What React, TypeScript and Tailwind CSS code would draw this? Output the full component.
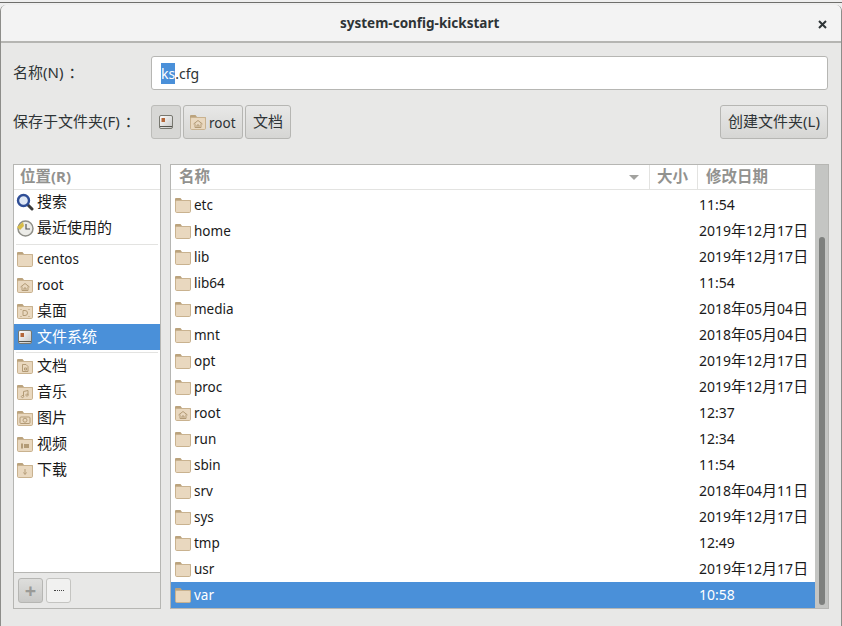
import type { ReactNode } from "react";

const font = { fontFamily: '"Noto Sans", "Noto Sans CJK SC", sans-serif' };

type Emblem = "none" | "home" | "desktop" | "doc" | "music" | "photo" | "video" | "download";

// the CJK glyphs in the dialog run larger than the latin ones
function Mixed({ text, latin = "text-[13.5px]", cjk = "text-[15px]" }: { text: string; latin?: string; cjk?: string }) {
  return (
    <span>
      {text.split(/([\u3000-\u9fff\uff00-\uffef]+)/).map((part, i) =>
        part ? (
          <span key={i} className={i % 2 ? cjk : latin}>
            {part}
          </span>
        ) : null,
      )}
    </span>
  );
}

function Folder({ emblem = "none" }: { emblem?: Emblem }) {
  const c = "#b39b76";
  return (
    <svg width="18" height="18" viewBox="0 0 18 18" className="shrink-0">
      <path d="M1 3 a1 1 0 0 1 1-1 h4.500 l1.500 2 h8 a1 1 0 0 1 1 1 v2 h-16z" fill="#bba37d" />
      <rect x="1.500" y="4.500" width="15" height="12" rx="1.200" fill="#e9d8bf" stroke="#c9b28f" />
      {emblem === "home" && <path d="M4.500 11 L9 7.500 L13.500 11 M6 10.500 V14.500 H12 V10.500 M8 14.500 V12 H10 V14.500" fill="none" stroke={c} />}
      {emblem === "desktop" && <path d="M7 8.500 h2 a2.500 2.500 0 0 1 0 5 h-2z M5 7 v1 M13 7 v1 M5 14 v1 M13 14 v1" fill="none" stroke={c} />}
      {emblem === "doc" && <path d="M6.500 7.500 h3.500 l2 2 v5 h-5.500z M8.500 11 h2 v2 h-2z" fill="none" stroke={c} />}
      {emblem === "music" && <path d="M7.500 13 v-4.500 l4.500-1 v4.500 M7.500 13 a1.200 1 0 1 1-.1-.1 M12 11.500 a1.200 1 0 1 1-.1-.1" fill="none" stroke={c} />}
      {emblem === "photo" && (
        <g fill="none" stroke={c}>
          <rect x="4" y="8" width="10" height="6.500" rx="1" />
          <circle cx="9" cy="11.200" r="2" />
        </g>
      )}
      {emblem === "video" && <path d="M5 8.500 h2 v5 h-2z M8 9 h5 v4 h-5z" fill={c} />}
      {emblem === "download" && <path d="M9 8 v4.500 M7.500 11.500 L9 13.500 L10.500 11.500" fill="none" stroke={c} />}
    </svg>
  );
}

function DriveIcon() {
  return (
    <svg width="16" height="16" viewBox="0 0 16 16" className="shrink-0">
      <defs>
        <linearGradient id="drive" x1="0" y1="0" x2="1" y2="1">
          <stop offset="0" stopColor="#ffffff" />
          <stop offset="1" stopColor="#c4c4c2" />
        </linearGradient>
      </defs>
      <rect x="1.500" y="1.500" width="13" height="13" rx="1.500" fill="url(#drive)" stroke="#77776f" />
      <rect x="3.500" y="4" width="3.500" height="4" fill="#b4673a" />
      <path d="M2 12.500 h12" stroke="#55554f" />
    </svg>
  );
}

function SearchIcon() {
  return (
    <svg width="18" height="18" viewBox="0 0 18 18" className="shrink-0">
      <path d="M11 11 L16 16" stroke="#3a3a3a" strokeWidth="3" strokeLinecap="round" />
      <circle cx="7.500" cy="7.500" r="5.500" fill="#dfe8f5" stroke="#2f4e96" strokeWidth="2.400" />
    </svg>
  );
}

function RecentIcon() {
  return (
    <svg width="18" height="18" viewBox="0 0 18 18" className="shrink-0">
      <circle cx="9.500" cy="9.500" r="7.500" fill="#ecece8" stroke="#8f8f88" strokeWidth="1.500" />
      <path d="M10 5 V10 H14" fill="none" stroke="#555" strokeWidth="1.200" />
      <path d="M1 8 L7 3 L8 7 L4 11z" fill="#d8bd48" />
    </svg>
  );
}

function Place({ icon, label, selected }: { icon: ReactNode; label: string; selected?: boolean }) {
  return (
    <div className={`flex h-[26px] items-center gap-[3px] pl-[2px] ${selected ? "bg-[#4a90d9] text-white" : "text-[#1a1a1a]"}`}>
      <span className="flex w-[18px] justify-center">{icon}</span>
      <span className="pb-[2px]">
        <Mixed text={label} />
      </span>
    </div>
  );
}

const files: [string, string, Emblem?][] = [
  ["etc", "11:54"],
  ["home", "2019年12月17日"],
  ["lib", "2019年12月17日"],
  ["lib64", "11:54"],
  ["media", "2018年05月04日"],
  ["mnt", "2018年05月04日"],
  ["opt", "2019年12月17日"],
  ["proc", "2019年12月17日"],
  ["root", "12:37", "home"],
  ["run", "12:34"],
  ["sbin", "11:54"],
  ["srv", "2018年04月11日"],
  ["sys", "2019年12月17日"],
  ["tmp", "12:49"],
  ["usr", "2019年12月17日"],
  ["var", "10:58"],
];

const pathButton = "flex h-[34px] items-center gap-[2px] rounded-[3px] border border-[#b6b6b3] bg-gradient-to-b from-[#e8e8e7] to-[#d6d6d4] text-[#2e3436]";

export default function App() {
  return (
    <div style={font} className="flex h-[626px] w-[842px] flex-col overflow-hidden bg-[#eeeeee]">
      <div className="mt-[2px] h-px bg-[#6e6e6b]" />
      <div className="mt-[2px] flex min-h-0 flex-1 flex-col overflow-hidden rounded-t-[6px] border-x border-[#8d8d8a] bg-[#e8e8e7]">
        <div className="flex h-[38px] shrink-0 items-center border-b-2 border-[#b5b5b2] bg-[#f3f3f3] pl-[339px] pr-[14px] pt-[1px]">
          <span className="flex-1 text-[13.5px] font-bold text-[#2e3436]">system-config-kickstart</span>
          <svg width="9" height="9" viewBox="0 0 9 9" className="mt-[2px]">
            <path d="M1 1 L8 8 M8 1 L1 8" stroke="#2e3436" strokeWidth="2" />
          </svg>
        </div>

        <div className="flex flex-1 flex-col pl-[12px] pr-[13px] pt-[13px]">
          <div className="flex h-[34px] shrink-0 items-center">
            <span className="w-[138px] pb-[2px] text-[#2e3436]">
              <Mixed text="名称(N)" latin="text-[15px]" />
              <span className="ml-[5px] text-[15px]">：</span>
            </span>
            <div className="flex h-[34px] flex-1 items-center rounded-[3px] border border-[#b6b6b3] bg-white pl-[9px] text-[14px] text-[#2e3436]">
              <span className="bg-[#4a90d9] text-white">ks</span>.cfg
            </div>
          </div>

          <div className="mt-[15px] flex h-[34px] shrink-0 items-center">
            <span className="w-[138px] pb-[2px] text-[#2e3436]">
              <Mixed text="保存于文件夹(F)" latin="text-[15px]" />
              <span className="ml-[5px] text-[15px]">：</span>
            </span>
            <div className="flex gap-[2px]">
              <div className="flex h-[34px] w-[30px] items-center justify-center rounded-[3px] border border-[#bcbcb9] bg-[#d7d7d5]">
                <DriveIcon />
              </div>
              <div className={`${pathButton} w-[60px] pl-[5px]`}>
                <Folder emblem="home" />
                <Mixed text="root" />
              </div>
              <div className={`${pathButton} w-[46px] justify-center pb-[2px]`}>
                <Mixed text="文档" />
              </div>
            </div>
            <div className={`${pathButton} ml-auto w-[108px] justify-center pb-[2px]`}>
              <Mixed text="创建文件夹(L)" latin="text-[15px]" />
            </div>
          </div>

          <div className="-mr-px mt-[25px] flex h-[445px] shrink-0 gap-[9px]">
            <div className="flex w-[148px] flex-col border border-[#b6b6b3] bg-white">
              <div className="flex h-[25px] shrink-0 items-center border-b border-[#e3e3e1] pb-[2px] pl-[6px] font-bold text-[#92928f]">
                <Mixed text="位置(R)" latin="text-[15px]" cjk="text-[15.500px]" />
              </div>
              <div className="-mt-px flex-1">
                <Place icon={<SearchIcon />} label="搜索" />
                <Place icon={<RecentIcon />} label="最近使用的" />
                <div className="mx-[2px] mb-px mt-[3px] h-px bg-[#e3e3e1]" />
                <Place icon={<Folder />} label="centos" />
                <Place icon={<Folder emblem="home" />} label="root" />
                <Place icon={<Folder emblem="desktop" />} label="桌面" />
                <Place icon={<DriveIcon />} label="文件系统" selected />
                <div className="mx-[2px] mt-[2px] h-px bg-[#e3e3e1]" />
                <Place icon={<Folder emblem="doc" />} label="文档" />
                <Place icon={<Folder emblem="music" />} label="音乐" />
                <Place icon={<Folder emblem="photo" />} label="图片" />
                <Place icon={<Folder emblem="video" />} label="视频" />
                <Place icon={<Folder emblem="download" />} label="下载" />
              </div>
              <div className="flex h-[36px] shrink-0 items-center gap-[3px] border-t border-[#b6b6b3] bg-[#e8e8e7] pl-[4px]">
                <div className="flex h-[25px] w-[25px] items-center justify-center rounded-[3px] border border-[#b6b6b3] bg-gradient-to-b from-[#dededc] to-[#c9c9c7] text-[20px] font-bold leading-none text-[#9a9a97]">+</div>
                <div className="flex h-[25px] w-[25px] items-center justify-center rounded-[3px] border border-[#c4c4c1] bg-[#f1f1f0]">
                  <div className="h-px w-[10px] border-t border-dotted border-[#444]" />
                </div>
              </div>
            </div>

            <div className="flex min-w-0 flex-1 border border-[#b6b6b3] bg-white">
              <div className="flex min-w-0 flex-1 flex-col">
                <div className="flex h-[25px] shrink-0 items-stretch border-b border-[#e3e3e1] font-bold text-[#92928f]">
                  <div className="flex flex-1 items-center justify-between pb-[2px] pl-[8px] pr-[10px]">
                    <Mixed text="名称" cjk="text-[15.500px]" />
                    <span className="mt-[2px] h-0 w-0 border-x-[5px] border-t-[5px] border-x-transparent border-t-[#a2a29f]" />
                  </div>
                  <div className="flex w-[48px] items-center border-l border-[#e3e3e1] pb-[2px] pl-[7px]">
                    <Mixed text="大小" cjk="text-[15.500px]" />
                  </div>
                  <div className="flex w-[118px] items-center border-l border-[#e3e3e1] pb-[2px] pl-[8px]">
                    <Mixed text="修改日期" cjk="text-[15.500px]" />
                  </div>
                </div>
                <div className="flex flex-1 flex-col pt-[2px]">
                  {files.map(([name, date, emblem]) => {
                    const selected = name === "var";
                    return (
                      <div key={name} className={`flex h-[26px] shrink-0 items-center pl-[3px] ${selected ? "bg-[#4a90d9] text-white" : "text-[#1a1a1a]"}`}>
                        <Folder emblem={emblem ?? "none"} />
                        <span className="ml-[2px] flex-1 text-[13.500px]">{name}</span>
                        <span className="w-[116px] pb-[2px]">
                          <Mixed text={date} latin="text-[14px]" />
                        </span>
                      </div>
                    );
                  })}
                </div>
              </div>
              <div className="flex w-[13px] shrink-0 flex-col bg-[#c4c5c3] pb-[3px] pl-[4px] pr-[3px] pt-[72px]">
                <div className="flex-1 rounded-full bg-[#7e807e]" />
              </div>
            </div>
          </div>
        </div>
      </div>
    </div>
  );
}
